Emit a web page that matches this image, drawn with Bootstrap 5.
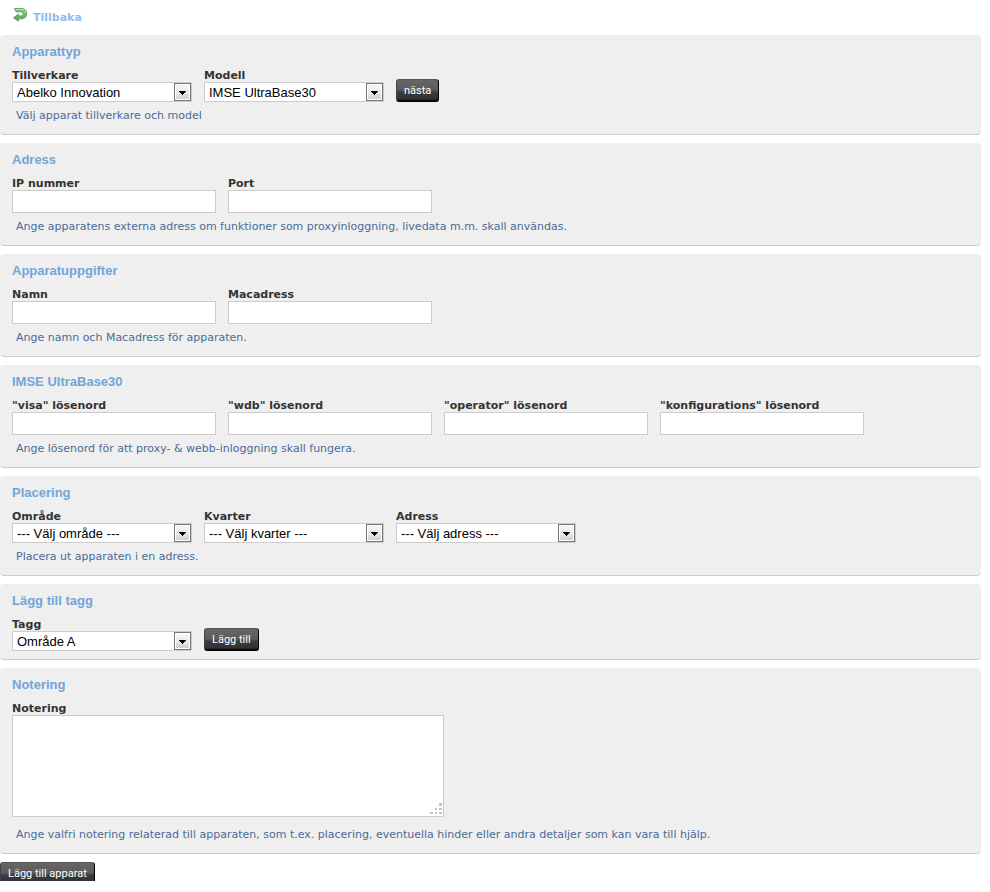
<!DOCTYPE html>
<html lang="sv">
<head>
<meta charset="utf-8">
<meta name="viewport" content="width=device-width, initial-scale=1">
<title>Lägg till apparat</title>
<link href="https://cdn.jsdelivr.net/npm/bootstrap@5.3.0/dist/css/bootstrap.min.css" rel="stylesheet">
<style>
body { font: 11px/16px "DejaVu Sans", Verdana, sans-serif; color: #333; background: #fff; }
.page { margin-right: 9px; }
.topbar { height: 35px; padding: 7px 12px 0; }
.back { color: #8fbdec; line-height: 22px; gap: 5px; }
.panel { background: #efefef; border-bottom: 1px solid #ccc; border-radius: 4px; padding: 6px 12px 10px; margin-bottom: 8px; }
.panel-tight { padding-bottom: 8px; }
.panel h2 { font: bold 13px/22px "Liberation Sans", Arial, sans-serif; color: #72a5d8; margin: 0 0 7px; }
.fields { gap: 12px; }
.fields label { display: block; font-weight: bold; line-height: 12px; }
.hint { color: #4a6b96; margin: 6px 0 0 4px; }
.fields .form-control, .fields .form-select { border: 1px solid #ccc; border-radius: 0; color: #000; font: 13px/16px "Liberation Sans", Arial, sans-serif; }
.fields .form-control { width: 204px; height: 23px; padding: 2px 4px; }
.fields .form-select { width: 180px; height: 20px; padding: 2px 20px 0 4px; line-height: 16px;
  background: #fff url("data:image/svg+xml,%3Csvg xmlns='http://www.w3.org/2000/svg' width='17' height='18'%3E%3ClinearGradient id='g' x2='0' y2='1'%3E%3Cstop stop-color='%23f6f6f6'/%3E%3Cstop offset='.5' stop-color='%23ebebeb'/%3E%3Cstop offset='1' stop-color='%23d0d0d0'/%3E%3C/linearGradient%3E%3Crect x='.5' y='.5' width='16' height='17' fill='%23fff' stroke='%23777'/%3E%3Crect x='2' y='2' width='13' height='14' fill='url(%23g)'/%3E%3Cpath d='M5 8h7v1h-1v1h-1v1H9v1H8v-1H7v-1H6V9H5z' fill='%23000'/%3E%3C/svg%3E") no-repeat right 0 top 0 / 17px 18px; }
.fields textarea.form-control { width: 432px; height: 102px; min-height: 0; resize: none;
  background: #fff url("data:image/svg+xml,%3Csvg xmlns='http://www.w3.org/2000/svg' width='12' height='12'%3E%3Cpath d='M9 0h3v3H9zM5 5h2v2H5zM9 5h3v2H9zM0 9h3v2H0zM5 9h2v2H5zM9 9h3v2H9z' fill='%23c4c4c4'/%3E%3C/svg%3E") no-repeat right 1px bottom 1px; }
.note-hint { margin-top: 10px; }
.btn-ink { height: 23px; padding: 0 7px; border: 1px solid; border-color: #555 #000 #000 #444; border-radius: 3px; font: 11px/21px Roboto, Tahoma, sans-serif; color: #fff; background: linear-gradient(#666 0, #5c5c5c 45%, #3a3a3a 60%, #333 90%, #000 100%); }
.btn-ink:hover { color: #fff; background: #555; }
.submit-strip { height: 19px; }
</style>
</head>
<body>
<form class="page">
  <div class="topbar">
    <a href="#" class="back d-inline-flex fw-bold text-decoration-none">
      <svg width="16" height="16" viewBox="0 0 16 16" aria-hidden="true"><defs><linearGradient id="leaf" x2="0" y2="1"><stop stop-color="#8ccc86"/><stop offset="1" stop-color="#55a457"/></linearGradient></defs><path d="M2.400 1.500h6.400c3.800 0 5.900 1.900 5.900 5.100 0 3.400-2.100 5.200-5.700 5.200H6.400v2.400L1.400 10.800l5-3.600v1.700h2.400c1.500 0 2.300-.7 2.300-2 0-1.400-.9-2.100-2.400-2.100H4z" fill="url(#leaf)" stroke="#4a9350" stroke-width=".8" stroke-linejoin="round"/><path d="M3.400 2.500h5.400c2.900 0 4.600 1.200 4.800 3.600" fill="none" stroke="#bfe6ba" stroke-width=".9"/></svg>
      <span>Tillbaka</span>
    </a>
  </div>

  <section class="panel">
    <h2>Apparattyp</h2>
    <div class="fields d-flex flex-wrap align-items-end">
      <div><label for="maker">Tillverkare</label><select id="maker" class="form-select"><option>Abelko Innovation</option></select></div>
      <div><label for="model">Modell</label><select id="model" class="form-select"><option>IMSE UltraBase30</option></select></div>
      <button type="button" class="btn btn-ink">nästa</button>
    </div>
    <p class="hint">Välj apparat tillverkare och model</p>
  </section>

  <section class="panel">
    <h2>Adress</h2>
    <div class="fields d-flex flex-wrap">
      <div><label for="ip">IP nummer</label><input id="ip" type="text" class="form-control"></div>
      <div><label for="port">Port</label><input id="port" type="text" class="form-control"></div>
    </div>
    <p class="hint">Ange apparatens externa adress om funktioner som proxyinloggning, livedata m.m. skall användas.</p>
  </section>

  <section class="panel">
    <h2>Apparatuppgifter</h2>
    <div class="fields d-flex flex-wrap">
      <div><label for="name">Namn</label><input id="name" type="text" class="form-control"></div>
      <div><label for="mac">Macadress</label><input id="mac" type="text" class="form-control"></div>
    </div>
    <p class="hint">Ange namn och Macadress för apparaten.</p>
  </section>

  <section class="panel">
    <h2>IMSE UltraBase30</h2>
    <div class="fields d-flex flex-wrap">
      <div><label for="visa">"visa" lösenord</label><input id="visa" type="text" class="form-control"></div>
      <div><label for="wdb">"wdb" lösenord</label><input id="wdb" type="text" class="form-control"></div>
      <div><label for="operator">"operator" lösenord</label><input id="operator" type="text" class="form-control"></div>
      <div><label for="config">"konfigurations" lösenord</label><input id="config" type="text" class="form-control"></div>
    </div>
    <p class="hint">Ange lösenord för att proxy- &amp; webb-inloggning skall fungera.</p>
  </section>

  <section class="panel">
    <h2>Placering</h2>
    <div class="fields d-flex flex-wrap">
      <div><label for="area">Område</label><select id="area" class="form-select"><option>--- Välj område ---</option></select></div>
      <div><label for="block">Kvarter</label><select id="block" class="form-select"><option>--- Välj kvarter ---</option></select></div>
      <div><label for="address">Adress</label><select id="address" class="form-select"><option>--- Välj adress ---</option></select></div>
    </div>
    <p class="hint">Placera ut apparaten i en adress.</p>
  </section>

  <section class="panel panel-tight">
    <h2>Lägg till tagg</h2>
    <div class="fields d-flex flex-wrap align-items-end">
      <div><label for="tag">Tagg</label><select id="tag" class="form-select"><option>Område A</option></select></div>
      <button type="button" class="btn btn-ink">Lägg till</button>
    </div>
  </section>

  <section class="panel">
    <h2>Notering</h2>
    <div class="fields d-flex">
      <div><label for="note">Notering</label><textarea id="note" class="form-control"></textarea></div>
    </div>
    <p class="hint note-hint">Ange valfri notering relaterad till apparaten, som t.ex. placering, eventuella hinder eller andra detaljer som kan vara till hjälp.</p>
  </section>

  <div class="submit-strip d-flex align-items-start overflow-hidden">
    <button type="submit" class="btn btn-ink">Lägg till apparat</button>
  </div>
</form>
<script src="https://cdn.jsdelivr.net/npm/bootstrap@5.3.0/dist/js/bootstrap.bundle.min.js"></script>
</body>
</html>
